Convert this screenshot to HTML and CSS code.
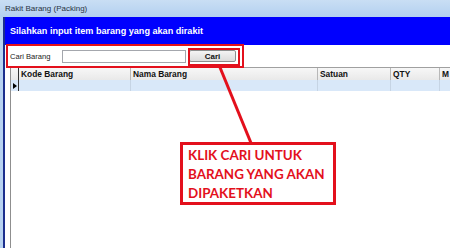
FILE: index.html
```html
<!DOCTYPE html>
<html lang="en">
<head>
    <meta charset="UTF-8">
    <title>Rakit Barang (Packing)</title>
    <link rel="stylesheet" href="styles.css">
</head>
<body>
    <div class="window">
        <div class="titlebar">Rakit Barang (Packing)</div>
        <div class="frame">
            <div class="client">
                <div class="banner">Silahkan input item barang yang akan dirakit</div>
                <div class="search">
                    <label for="cari">Cari Barang</label>
                    <input type="text" id="cari">
                    <button type="button">Cari</button>
                </div>
                <div class="grid">
                    <div class="grid-row head">
                        <div class="cell sel"></div>
                        <div class="cell kode">Kode Barang</div>
                        <div class="cell nama">Nama Barang</div>
                        <div class="cell satuan">Satuan</div>
                        <div class="cell qty">QTY</div>
                        <div class="cell more">M</div>
                    </div>
                    <div class="grid-row data">
                        <div class="cell sel"><span class="arrow"></span></div>
                        <div class="cell kode"></div>
                        <div class="cell nama"></div>
                        <div class="cell satuan"></div>
                        <div class="cell qty"></div>
                        <div class="cell more"></div>
                    </div>
                </div>
            </div>
        </div>

        <!-- annotation overlay -->
        <div class="mark mark-search"></div>
        <div class="mark mark-button"></div>
        <svg class="pointer" width="450" height="248">
            <line x1="219" y1="65" x2="251" y2="143" stroke="#e3101c" stroke-width="3"/>
        </svg>
        <div class="callout">KLIK CARI UNTUK<br>BARANG YANG AKAN<br>DIPAKETKAN</div>
    </div>
</body>
</html>
```

FILE: styles.css
```css
body {
    margin: 0;
    background-color: #fff;
    font-family: "Liberation Sans", Arial, sans-serif;
}

.window {
    position: relative;
    width: 450px;
    height: 248px;
    overflow: hidden;
    display: flex;
    flex-direction: column;
}

.titlebar {
    height: 17px;
    padding-left: 5px;
    display: flex;
    align-items: center;
    font-size: 8px;
    color: #2a3442;
    background: linear-gradient(to bottom, #c9def4, #b3d0f0);
}

.frame {
    flex: 1;
    display: flex;
    padding-left: 3px;
    background: linear-gradient(to right, #b8d3f2, #9fc2ea);
}

.client {
    flex: 1;
    background-color: #fff;
    border-left: 2px solid #1c2f8e;
    display: flex;
    flex-direction: column;
}

.banner {
    height: 28px;
    padding-left: 5px;
    display: flex;
    align-items: center;
    background-color: #0000fe;
    color: #fff;
    font-weight: bold;
    font-size: 9.1px;
}

.search {
    height: 22px;
    padding-left: 5px;
    display: flex;
    align-items: center;
    font-size: 7.6px;
    color: #222;
}

.search label {
    width: 52px;
}

.search input {
    width: 122px;
    height: 11px;
    margin: 0;
    padding: 0;
    border: 1px solid #a4a7ad;
}

.search button {
    width: 47px;
    height: 12px;
    margin-left: 3px;
    padding: 0;
    border: 1px solid #8d8d8d;
    border-radius: 2px;
    background: linear-gradient(to bottom, #f4f4f4, #dcdcdc);
    font-family: "Liberation Sans", Arial, sans-serif;
    font-weight: bold;
    font-size: 8px;
    color: #111;
}

.grid {
    flex: 1;
    margin-left: 5px;
    border-left: 1px solid #8f8f8f;
    border-top: 1px solid #a0a0a0;
}

.grid-row {
    display: flex;
}

.grid-row.head {
    height: 12px;
    background: linear-gradient(to bottom, #f7f7f7, #e9e9e9);
    font-weight: bold;
    font-size: 8.4px;
    color: #111;
}

.grid-row.data {
    height: 11px;
    background-color: #d9e8f9;
}

.cell {
    display: flex;
    align-items: center;
    padding-left: 2px;
    border-right: 1px solid #b8b8b8;
    box-sizing: border-box;
    white-space: nowrap;
    overflow: hidden;
}

.data .cell {
    border-right-color: #c6d4e4;
}

.cell.sel { width: 8px; padding-left: 2px; border-right-color: #333; }
.cell.kode { width: 112px; }
.cell.nama { width: 187px; }
.cell.satuan { width: 73px; }
.cell.qty { width: 49px; }
.cell.more { width: 40px; border-right: none; }

.arrow {
    width: 0;
    height: 0;
    border-top: 3px solid transparent;
    border-bottom: 3px solid transparent;
    border-left: 4px solid #000;
}

/* red annotations drawn on top of the screenshot */
.mark {
    position: absolute;
    border: 2px solid #e3101c;
    box-sizing: border-box;
}

.mark-search {
    left: 6px;
    top: 44px;
    width: 238px;
    height: 24px;
}

.mark-button {
    left: 188px;
    top: 48px;
    width: 52px;
    height: 18px;
}

.pointer {
    position: absolute;
    left: 0;
    top: 0;
}

.callout {
    position: absolute;
    left: 180px;
    top: 142px;
    width: 156px;
    height: 63px;
    box-sizing: border-box;
    border: 3px solid #e3101c;
    background-color: #fff;
    padding: 1px 0 0 5px;
    color: #e3101c;
    font-family: Lato, "Open Sans", sans-serif;
    font-weight: bold;
    font-size: 13.4px;
    line-height: 19px;
    white-space: nowrap;
}
```
